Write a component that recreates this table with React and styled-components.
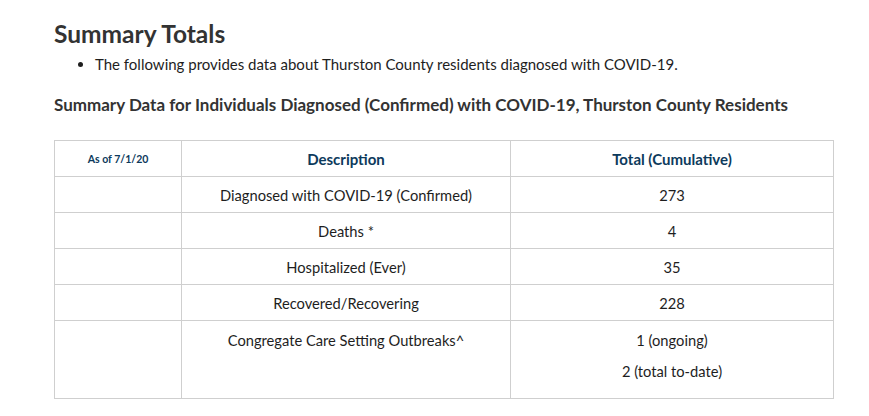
import React from "react";
import styled, { createGlobalStyle } from "styled-components";

const GlobalStyle = createGlobalStyle`
  body {
    margin: 0;
    background: #fff;
    font-family: Lato, "Liberation Sans", sans-serif;
    color: #1e1e1e;
  }
`;

const Page = styled.div`
  padding: 18px 36px 0 54px;
`;

const Title = styled.h2`
  margin: 0;
  font-size: 24.5px;
  line-height: 32px;
  font-weight: 700;
  color: #333;
`;

const Bullets = styled.ul`
  margin: 2px 0 0;
  padding-left: 41px;
  font-size: 15px;
  line-height: 24px;
  color: #1e1e1e;
`;

const SubTitle = styled.h3`
  margin: 17px 0 0;
  font-size: 17px;
  line-height: 24px;
  font-weight: 700;
  color: #333;
`;

const Table = styled.table`
  margin-top: 23px;
  width: 780px;
  table-layout: fixed;
  border-collapse: collapse;
  font-size: 14.7px;
  color: #1e1e1e;
`;

const HeadCell = styled.th`
  border: 1px solid #cfcfcf;
  height: 35px;
  padding: 0 8px;
  text-align: center;
  color: #0d3a5c;
  font-size: ${props => (props.small ? "10.5px" : "15px")};
  font-weight: 700;
`;

const Cell = styled.td`
  border: 1px solid #cfcfcf;
  height: 35px;
  padding: 0 8px;
  text-align: center;
  vertical-align: ${props => (props.top ? "top" : "middle")};
  ${props => props.top && "padding-top: 7px; padding-bottom: 8px;"}
`;

const Line = styled.p`
  margin: 0 0 7px;
  line-height: 24px;
`;

const rows = [
  ["Diagnosed with COVID-19 (Confirmed)", "273"],
  ["Deaths *", "4"],
  ["Hospitalized (Ever)", "35"],
  ["Recovered/Recovering", "228"],
];

export default function App() {
  return (
    <>
      <GlobalStyle />
      <Page>
        <Title>Summary Totals</Title>
        <Bullets>
          <li>The following provides data about Thurston County residents diagnosed with COVID-19.</li>
        </Bullets>
        <SubTitle>Summary Data for Individuals Diagnosed (Confirmed) with COVID-19, Thurston County Residents</SubTitle>
        <Table>
          <colgroup>
            <col style={{ width: 127 }} />
            <col style={{ width: 329 }} />
            <col />
          </colgroup>
          <thead>
            <tr>
              <HeadCell small>As of 7/1/20</HeadCell>
              <HeadCell>Description</HeadCell>
              <HeadCell>Total (Cumulative)</HeadCell>
            </tr>
          </thead>
          <tbody>
            {rows.map(([desc, total]) => (
              <tr key={desc}>
                <Cell />
                <Cell>{desc}</Cell>
                <Cell>{total}</Cell>
              </tr>
            ))}
            <tr>
              <Cell />
              <Cell top>
                <Line>Congregate Care Setting Outbreaks^</Line>
              </Cell>
              <Cell top>
                <Line>1 (ongoing)</Line>
                <Line>2 (total to-date)</Line>
              </Cell>
            </tr>
          </tbody>
        </Table>
      </Page>
    </>
  );
}
